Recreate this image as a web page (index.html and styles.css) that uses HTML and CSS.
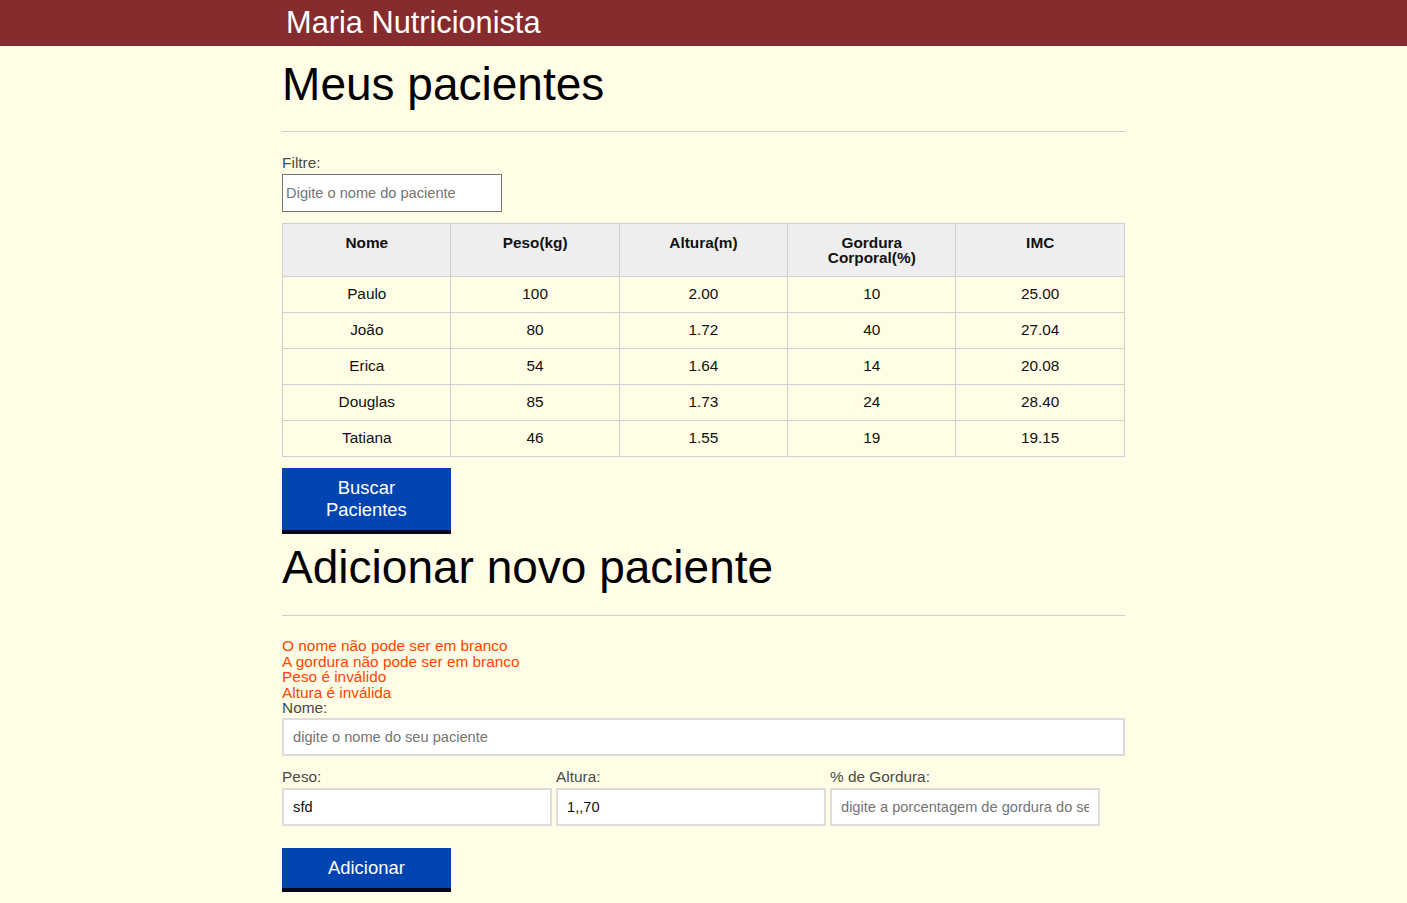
FILE: index.html
```html
<!DOCTYPE html>
<html lang="pt-BR">
<head>
<meta charset="utf-8">
<title>Maria Nutricionista</title>
<link rel="stylesheet" href="styles.css">
</head>
<body>
<header class="topbar">
  <div class="container">
    <h1 class="brand">Maria Nutricionista</h1>
  </div>
</header>
<main class="container">
  <section class="patients">
    <h2 class="section-title">Meus pacientes</h2>
    <hr class="divider">
    <label class="field-label" for="filtrar-tabela">Filtre:</label>
    <input class="filter-input" id="filtrar-tabela" type="text" placeholder="Digite o nome do paciente">
    <table class="patients-table">
      <thead>
        <tr>
          <th>Nome</th>
          <th>Peso(kg)</th>
          <th>Altura(m)</th>
          <th>Gordura Corporal(%)</th>
          <th>IMC</th>
        </tr>
      </thead>
      <tbody>
        <tr><td>Paulo</td><td>100</td><td>2.00</td><td>10</td><td>25.00</td></tr>
        <tr><td>João</td><td>80</td><td>1.72</td><td>40</td><td>27.04</td></tr>
        <tr><td>Erica</td><td>54</td><td>1.64</td><td>14</td><td>20.08</td></tr>
        <tr><td>Douglas</td><td>85</td><td>1.73</td><td>24</td><td>28.40</td></tr>
        <tr><td>Tatiana</td><td>46</td><td>1.55</td><td>19</td><td>19.15</td></tr>
      </tbody>
    </table>
    <button class="btn btn-search" type="button">Buscar Pacientes</button>
  </section>

  <section class="add-patient">
    <h2 class="section-title section-title-add">Adicionar novo paciente</h2>
    <hr class="divider divider-add">
    <ul class="errors">
      <li>O nome não pode ser em branco</li>
      <li>A gordura não pode ser em branco</li>
      <li>Peso é inválido</li>
      <li>Altura é inválida</li>
    </ul>
    <form class="patient-form">
      <div class="group">
        <label class="field-label" for="nome">Nome:</label>
        <input class="form-input" id="nome" type="text" placeholder="digite o nome do seu paciente">
      </div>
      <div class="group-row">
        <div class="group group-third">
          <label class="field-label" for="peso">Peso:</label>
          <input class="form-input" id="peso" type="text" value="sfd">
        </div>
        <div class="group group-third">
          <label class="field-label" for="altura">Altura:</label>
          <input class="form-input" id="altura" type="text" value="1,,70">
        </div>
        <div class="group group-third">
          <label class="field-label" for="gordura">% de Gordura:</label>
          <input class="form-input" id="gordura" type="text" placeholder="digite a porcentagem de gordura do seu paciente">
        </div>
      </div>
      <button class="btn btn-add" type="button">Adicionar</button>
    </form>
  </section>
</main>
</body>
</html>
```

FILE: styles.css
```css
* {
  box-sizing: border-box;
}

html, body {
  margin: 0;
  padding: 0;
}

body {
  background-color: #fffde6;
  font-family: "Liberation Sans", Arial, sans-serif;
  font-size: 15.36px;
  color: #111;
}

.container {
  width: 59.9%;
  margin: 0 auto;
}

.topbar {
  background-color: #872c2e;
  height: 46px;
}

.brand {
  margin: 0;
  padding-left: 4px;
  font-size: 30.72px;
  font-weight: normal;
  line-height: 46px;
  color: #fff;
}

.section-title {
  margin: 11.7px 0 0;
  font-size: 46px;
  font-weight: normal;
  line-height: 53px;
  color: #000;
}

.section-title-add {
  margin-top: 6.7px;
}

.divider {
  margin: 20px 0 0;
  border: 0;
  border-top: 1px solid #cfcfcf;
  height: 0;
}

.divider-add {
  margin-top: 21px;
}

.field-label {
  display: block;
  margin: 22px 0 3px;
  color: #4a4a4a;
  line-height: 17px;
}

.filter-input {
  display: block;
  width: 220px;
  height: 38px;
  padding: 0 3px;
  border: 1px solid #767676;
  background: #fff;
  font-family: inherit;
  font-size: 14.6px;
  color: #111;
}

.filter-input::placeholder,
.form-input::placeholder {
  color: #757575;
}

.patients-table {
  width: 100%;
  margin-top: 11px;
  border-collapse: collapse;
  table-layout: fixed;
}

.patients-table th,
.patients-table td {
  border: 1px solid #d0d0d0;
  padding: 8.5px 9px 9.5px;
  text-align: center;
  vertical-align: top;
  line-height: 17px;
}

.patients-table th {
  padding: 11px 9px 10px;
  line-height: 15.5px;
  background-color: #eeeeee;
  font-weight: bold;
}

.btn {
  display: block;
  width: 20%;
  padding: 9px 20px;
  border: 0;
  border-bottom: 4px solid #05081a;
  border-radius: 0;
  background-color: #0044b1;
  color: #fff;
  font-family: inherit;
  font-size: 18.43px;
  line-height: 22px;
  text-align: center;
  cursor: pointer;
}

.btn-search {
  margin-top: 11.3px;
}

.errors {
  list-style: none;
  margin: 22.6px 0 0;
  padding: 0;
  line-height: 15.5px;
  color: #ff4500;
}

.patient-form {
  margin: 0;
}

.patient-form .field-label {
  margin: 0 0 3px;
  line-height: 15px;
}

.group-row {
  display: flex;
  gap: 4.27px;
  margin-top: 12.3px;
}

.group-row .field-label {
  margin-bottom: 4.3px;
}

.group-third {
  width: 32%;
}

.form-input {
  display: block;
  width: 100%;
  height: 38px;
  padding: 0 9px;
  border: 2px solid #dcdcdc;
  background: #fff;
  font-family: inherit;
  font-size: 14.6px;
  color: #111;
}

.btn-add {
  margin-top: 22.05px;
}
```
